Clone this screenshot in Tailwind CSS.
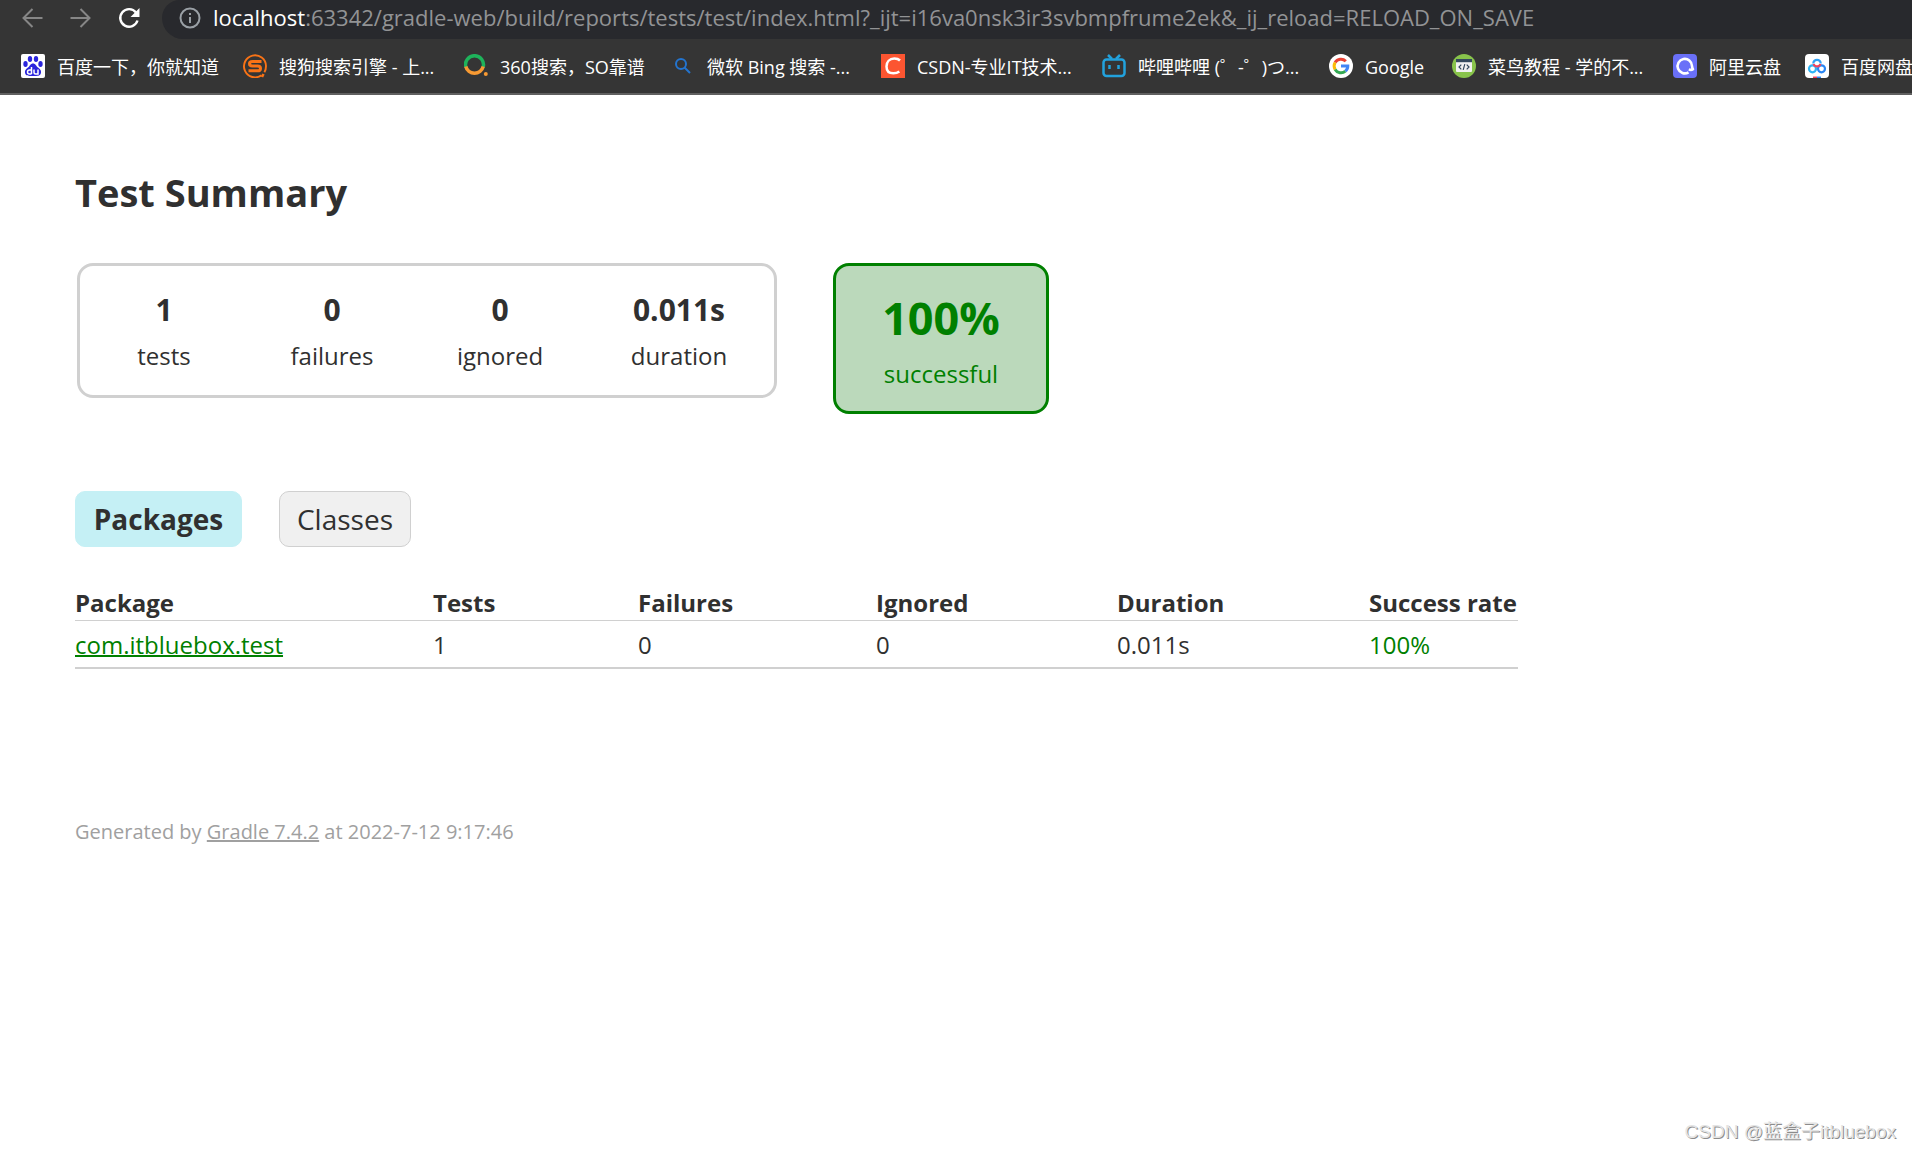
<!DOCTYPE html>
<html lang="en">
<head>
<meta charset="utf-8">
<title>Test results - Test Summary</title>
<script src="https://cdn.jsdelivr.net/npm/@tailwindcss/browser@4"></script>
</head>
<body class="flex min-h-screen flex-col overflow-x-hidden bg-white font-['Open_Sans','Noto_Sans_CJK_SC',sans-serif] text-2xl text-[#303030]">

<!-- Browser toolbar and bookmarks -->
<header class="border-b-2 border-[#606060] bg-[#353535]">
  <div class="flex h-[39px] items-start">
    <div class="flex h-9 w-[162px] shrink-0 items-center gap-6 pl-5">
      <button type="button" aria-label="Back" class="size-6"><svg viewBox="0 0 24 24" class="size-6" fill="none" stroke="#868686" stroke-width="2"><path d="M22.500 12H4M12.500 3L3.500 12l9 9"/></svg></button>
      <button type="button" aria-label="Forward" class="size-6"><svg viewBox="0 0 24 24" class="size-6" fill="none" stroke="#868686" stroke-width="2"><path d="M2.500 12H21M12.500 3l9 9-9 9"/></svg></button>
      <button type="button" aria-label="Reload" class="size-6"><svg viewBox="0 0 24 24" class="size-6" fill="none" stroke="#fff" stroke-width="2.400"><path d="M20 6.500A8.800 8.800 0 1 0 21.500 14.500"/><path d="M23.500 2v9h-9z" fill="#fff" stroke="none"/></svg></button>
    </div>
    <div class="flex h-full min-w-0 grow items-start rounded-tl-[18px] rounded-bl-[21px] bg-[#28292d] pl-4">
      <div class="flex h-9 items-center gap-[11px]">
        <svg viewBox="0 0 24 24" class="size-6 shrink-0" fill="none" stroke="#9aa0a6" stroke-width="2"><circle cx="12" cy="12" r="9.500"/><path d="M12 11v6M12 7v2"/></svg>
        <p class="pb-0.5 text-[22px] leading-8 whitespace-nowrap text-[#929395]"><span class="text-white">localhost</span>:63342/gradle-web/build/reports/tests/test/index.html?_ijt=i16va0nsk3ir3svbmpfrume2ek&amp;_ij_reload=RELOAD_ON_SAVE</p>
      </div>
    </div>
  </div>
  <nav aria-label="Bookmarks" class="flex h-[54px] items-center gap-6 overflow-hidden pl-[21px] text-lg whitespace-nowrap text-white">
    <a href="#" class="flex w-[198px] shrink-0 items-center gap-3">
      <svg viewBox="0 0 24 24" class="size-6 shrink-0"><rect width="24" height="24" rx="2" fill="#fff"/><g fill="#2a24dc"><ellipse cx="4.500" cy="10" rx="2.200" ry="3"/><ellipse cx="9" cy="5" rx="2.200" ry="3"/><ellipse cx="15" cy="5" rx="2.200" ry="3"/><ellipse cx="19.500" cy="10" rx="2.200" ry="3"/><path d="M12 9.500c-2.500 0-3 2.500-5 4-3 2.200-3.500 4-2.800 6 .8 2.400 3 2.500 7.800 2.500s7-.1 7.800-2.500c.7-2 .2-3.800-2.800-6-2-1.500-2.500-4-5-4z"/></g><path d="M10.500 13v7M10.500 16H8.500a1.800 1.800 0 0 0 0 4h2M13 15.500v3a1.500 1.500 0 0 0 1.500 1.500H17v-4.500" fill="none" stroke="#fff" stroke-width="1.500"/></svg>
      <span class="pt-0.5">百度一下，你就知道</span></a>
    <a href="#" class="flex w-[197px] shrink-0 items-center gap-3">
      <svg viewBox="0 0 24 24" class="size-6 shrink-0" fill="none" stroke="#f97316"><path d="M18.500 21.200A11 11 0 1 1 23 12c0 2.600-.6 4.600-1.600 6.200" stroke-width="1.900"/><path d="M18.500 7.500H9.500C5.500 7.500 5.500 12 9.500 12h5c4 0 4 4.800 0 4.800H5.500" stroke-width="3"/><path d="M20.500 20l-1.500 3" stroke-width="2.500"/></svg>
      <span class="pt-0.5">搜狗搜索引擎 - 上...</span></a>
    <a href="#" class="flex w-[183px] shrink-0 items-center gap-3">
      <svg viewBox="0 0 24 24" class="size-6 shrink-0" fill="none" stroke-width="3.500"><path d="M1.800 13a9 9 0 1 1 17.400 0" stroke="#1eb35b"/><path d="M1.800 12.500a9 9 0 0 0 17.400 0" stroke="#f79a33"/><circle cx="21.800" cy="20" r="2" fill="#f79a33"/></svg>
      <span class="pt-0.5">360搜索，SO靠谱</span></a>
    <a href="#" class="flex w-[186px] shrink-0 items-center gap-3">
      <svg viewBox="0 0 24 24" class="size-6 shrink-0" fill="none" stroke="#2374cf" stroke-width="2"><circle cx="10" cy="10" r="5"/><path d="M13.500 13.500l5.500 5.500"/></svg>
      <span class="pt-0.5">微软 Bing 搜索 -...</span></a>
    <a href="#" class="flex w-[197px] shrink-0 items-center gap-3">
      <svg viewBox="0 0 24 24" class="size-6 shrink-0"><rect width="24" height="24" fill="#fc5531"/><path d="M19 6.500C17.500 5 15.500 4.600 13.300 4.600 8.500 4.600 5.500 8 5.500 12.500c0 4.300 2.500 6.800 6.800 6.800 2.500 0 4.500-.6 6-1.800" fill="none" stroke="#fff" stroke-width="2.500"/></svg>
      <span class="pt-0.5">CSDN-专业IT技术...</span></a>
    <a href="#" class="flex w-[203px] shrink-0 items-center gap-3">
      <svg viewBox="0 0 24 24" class="size-6 shrink-0" fill="none" stroke="#22a2dd" stroke-width="2.500"><rect x="1.500" y="5.500" width="21" height="16.500" rx="3"/><path d="M6 1l4 4M18 1l-4 4"/><path d="M7.500 11v4M16.500 11v4"/></svg>
      <span class="pt-0.5">哔哩哔哩 (゜-゜)つ...</span></a>
    <a href="#" class="flex w-[99px] shrink-0 items-center gap-3">
      <svg viewBox="0 0 24 24" class="size-6 shrink-0" fill="none" stroke-width="3"><circle cx="12" cy="12" r="12" fill="#fff"/><path d="M16.800 7.200A6.800 6.800 0 0 0 6.100 8.600" stroke="#ea4335"/><path d="M6.100 8.600a6.800 6.800 0 0 0 0 6.800" stroke="#fbbc05"/><path d="M6.100 15.400a6.800 6.800 0 0 0 10.300 1.800" stroke="#34a853"/><path d="M12 12h6.800c0 2.400-.9 4-2.400 5.200" stroke="#4285f4"/></svg>
      <span class="pt-0.5">Google</span></a>
    <a href="#" class="flex w-[197px] shrink-0 items-center gap-3">
      <svg viewBox="0 0 24 24" class="size-6 shrink-0"><circle cx="12" cy="12" r="12" fill="#88c34b"/><rect x="4" y="5" width="16" height="13" rx="1" fill="#f1f1f1"/><path d="M4 5h16v3.200H4z" fill="#35495e"/><path d="M9.300 10.700L7 13l2.300 2.300M14.700 10.700L17 13l-2.300 2.300M12.800 10.200l-1.600 5.600" fill="none" stroke="#35495e" stroke-width="1.200"/></svg>
      <span class="pt-0.5">菜鸟教程 - 学的不...</span></a>
    <a href="#" class="flex w-[108px] shrink-0 items-center gap-3">
      <svg viewBox="0 0 24 24" class="size-6 shrink-0"><rect width="24" height="24" rx="4" fill="#6a70f8"/><path d="M15.500 18.300A7.200 7.200 0 1 1 19 12c0 1.200.3 2.200 1 3.200-1.200.8-2.800.8-4.200.2" fill="none" stroke="#fff" stroke-width="2.600" stroke-linejoin="round"/></svg>
      <span class="pt-0.5">阿里云盘</span></a>
    <a href="#" class="flex shrink-0 items-center gap-3">
      <svg viewBox="0 0 24 24" class="size-6 shrink-0" fill="none" stroke-width="2.200"><rect width="24" height="24" rx="4" fill="#fff"/><circle cx="7.500" cy="14.800" r="3.500" stroke="#2fb4f5"/><circle cx="16.500" cy="14.800" r="3.500" stroke="#2a86f3"/><path d="M8.300 9.500a3.700 3.700 0 0 1 7.400 0" stroke="#2fa0f5"/><path d="M8.600 10a3.600 3.600 0 0 0 6.800 0" stroke="#f0425f"/><path d="M8 23.300h4" stroke="#f0425f" stroke-width="1.500"/><path d="M12 23.300h4" stroke="#2a86f3" stroke-width="1.500"/></svg>
      <span class="pt-0.5">百度网盘</span></a>
  </nav>
</header>

<main class="px-[75px] pt-[73px]">
  <h1 class="text-[38px] leading-[48px] font-bold">Test Summary</h1>

  <!-- Totals -->
  <section class="mt-[47px] flex items-start gap-14 pl-0.5 text-center leading-9">
    <dl class="grid w-[700px] grid-cols-[168px_168px_168px_1fr] rounded-2xl border-3 border-[#d0d0d0] pt-6 pb-[21px]">
      <div class="flex flex-col-reverse gap-2"><dt>tests</dt><dd class="text-3xl leading-10 font-bold">1</dd></div>
      <div class="flex flex-col-reverse gap-2"><dt>failures</dt><dd class="text-3xl leading-10 font-bold">0</dd></div>
      <div class="flex flex-col-reverse gap-2"><dt>ignored</dt><dd class="text-3xl leading-10 font-bold">0</dd></div>
      <div class="flex flex-col-reverse gap-2"><dt>duration</dt><dd class="text-3xl leading-10 font-bold">0.011s</dd></div>
    </dl>
    <div class="flex w-[216px] flex-col gap-2.5 rounded-2xl border-3 border-[#008000] bg-[#bbd9bb] pt-6 pb-[19px] text-[#008000]">
      <p class="text-[45px] leading-14 font-bold">100%</p>
      <p>successful</p>
    </div>
  </section>

  <div role="tablist" class="mt-[77px] flex gap-[37px] text-[28px] leading-[54px]">
    <button type="button" role="tab" aria-selected="true" class="w-[167px] rounded-[10px] border border-[#c5f0f5] bg-[#c5f0f5] font-bold">Packages</button>
    <button type="button" role="tab" aria-selected="false" class="w-[132px] rounded-[10px] border border-[#d0d0d0] bg-[#f0f0f0]">Classes</button>
  </div>

  <table class="mt-[39px] w-[1443px] table-fixed border-separate border-spacing-0 text-left">
    <colgroup><col class="w-[358px]"><col class="w-[205px]"><col class="w-[238px]"><col class="w-[241px]"><col class="w-[252px]"><col></colgroup>
    <thead class="leading-[34px] font-bold whitespace-nowrap">
      <tr>
        <th class="border-b border-[#d0d0d0]">Package</th>
        <th class="border-b border-[#d0d0d0]">Tests</th>
        <th class="border-b border-[#d0d0d0]">Failures</th>
        <th class="border-b border-[#d0d0d0]">Ignored</th>
        <th class="border-b border-[#d0d0d0]">Duration</th>
        <th class="border-b border-[#d0d0d0]">Success rate</th>
      </tr>
    </thead>
    <tbody class="leading-9">
      <tr>
        <td class="border-b-2 border-[#d0d0d0] pt-1.5 pb-1"><a href="#" class="text-[#008000] underline decoration-2">com.itbluebox.test</a></td>
        <td class="border-b-2 border-[#d0d0d0] pt-1.5 pb-1">1</td>
        <td class="border-b-2 border-[#d0d0d0] pt-1.5 pb-1">0</td>
        <td class="border-b-2 border-[#d0d0d0] pt-1.5 pb-1">0</td>
        <td class="border-b-2 border-[#d0d0d0] pt-1.5 pb-1">0.011s</td>
        <td class="border-b-2 border-[#d0d0d0] pt-1.5 pb-1 text-[#008000]">100%</td>
      </tr>
    </tbody>
  </table>

  <footer class="mt-[148px] text-xl leading-[30px] text-[#a0a0a0]">Generated by <a href="#" class="underline">Gradle 7.4.2</a> at 2022-7-12 9:17:46</footer>
</main>

<p class="mt-auto self-end pr-4 font-['Liberation_Sans','Noto_Sans_CJK_SC',sans-serif] text-[19px] leading-9 text-[#e4e4e4] [text-shadow:1px_1px_0_#8c8c8c]">CSDN @蓝盒子itbluebox</p>
</body>
</html>
